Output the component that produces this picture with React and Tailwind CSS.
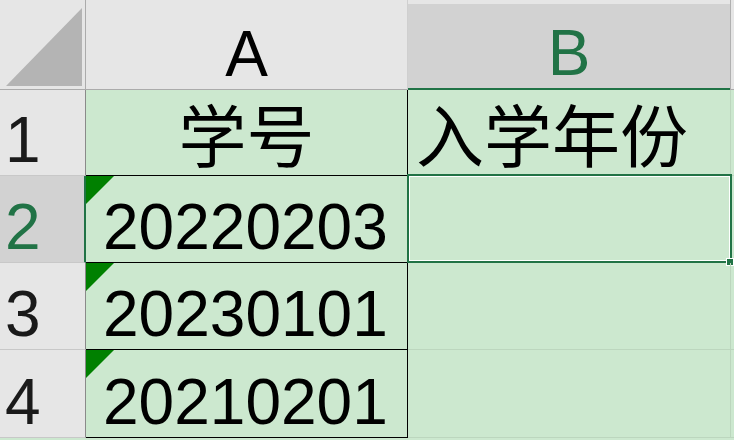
const rows = [
  { n: '1', h: 'h-[86px]', a: '学号', b: '入学年份', head: true },
  { n: '2', h: 'h-[87px]', a: '20220203', b: '', active: true },
  { n: '3', h: 'h-[87px]', a: '20230101', b: '' },
  { n: '4', h: 'h-[88px]', a: '20210201', b: '' },
]

function Flag () {
  return (
    <svg className="absolute left-0 top-0" width="28" height="28" viewBox="0 0 28 28">
      <polygon points="0,0 28,0 0,28" fill="#008000" />
    </svg>
  )
}

function Row ({ row }) {
  return (
    <div className={`flex ${row.h}`}>
      {/* row number */}
      <div
        className={`w-[86px] shrink-0 flex items-end pl-[5px] pb-[3px] border-b border-r border-b-[#c8c8c8] ${
          row.active
            ? 'bg-[#d2d2d2] text-[#217346] border-r-2 border-r-[#217346]'
            : 'bg-[#e6e6e6] text-[#1a1a1a] border-r-[#8a8a8a]'
        }`}
      >
        {row.n}
      </div>

      {/* column A */}
      <div
        className={`relative w-[322px] shrink-0 flex items-end pb-[3px] border-r border-b border-black ${
          row.head ? 'justify-center text-[68px]' : 'pl-[17px]'
        }`}
      >
        {!row.head && <Flag />}
        {row.a}
      </div>

      {/* column B */}
      <div className="relative w-[323px] shrink-0 flex items-end pl-[8px] pb-[3px] text-[68px] border-r border-b border-[#bcd6be]">
        {row.b}
        {row.active && (
          <>
            <div className="absolute -left-[1px] -top-[2px] -right-[2px] -bottom-[1px] border-2 border-[#217346] shadow-[inset_0_0_0_1px_#ffffff]" />
            <div className="absolute -right-[4px] -bottom-[4px] w-[8px] h-[8px] bg-[#217346] border border-white" />
          </>
        )}
      </div>

      <div className="flex-1 border-b border-[#bcd6be]" />
    </div>
  )
}

export default function App () {
  return (
    <div className="w-[734px] h-[440px] overflow-hidden bg-[#cce8cf] text-black text-[64px] leading-none font-['Liberation_Sans','Noto_Sans_CJK_SC',sans-serif]">
      {/* column headers */}
      <div className="flex h-[90px]">
        <div className="relative w-[86px] shrink-0 bg-[#e6e6e6] border-r border-b border-[#ababab]">
          <svg className="absolute left-0 top-0" width="85" height="89" viewBox="0 0 85 89">
            <polygon points="6,86 82,86 82,8" fill="#b4b4b4" />
          </svg>
        </div>
        <div className="w-[322px] shrink-0 flex items-end justify-center pb-[3px] bg-[#e6e6e6] border-r border-b border-r-[#cfcfcf] border-b-[#ababab]">
          A
        </div>
        <div className="w-[323px] shrink-0 flex flex-col pt-[4px] bg-[#e6e6e6] border-r border-[#b0b0b0]">
          <div className="flex-1 flex items-end justify-center pb-[3px] bg-[#d2d2d2] text-[#217346] border-b-2 border-[#217346]">
            B
          </div>
        </div>
        <div className="flex-1 bg-[#e6e6e6] border-b border-[#ababab]" />
      </div>

      {rows.map(r => (
        <Row key={r.n} row={r} />
      ))}
    </div>
  )
}
